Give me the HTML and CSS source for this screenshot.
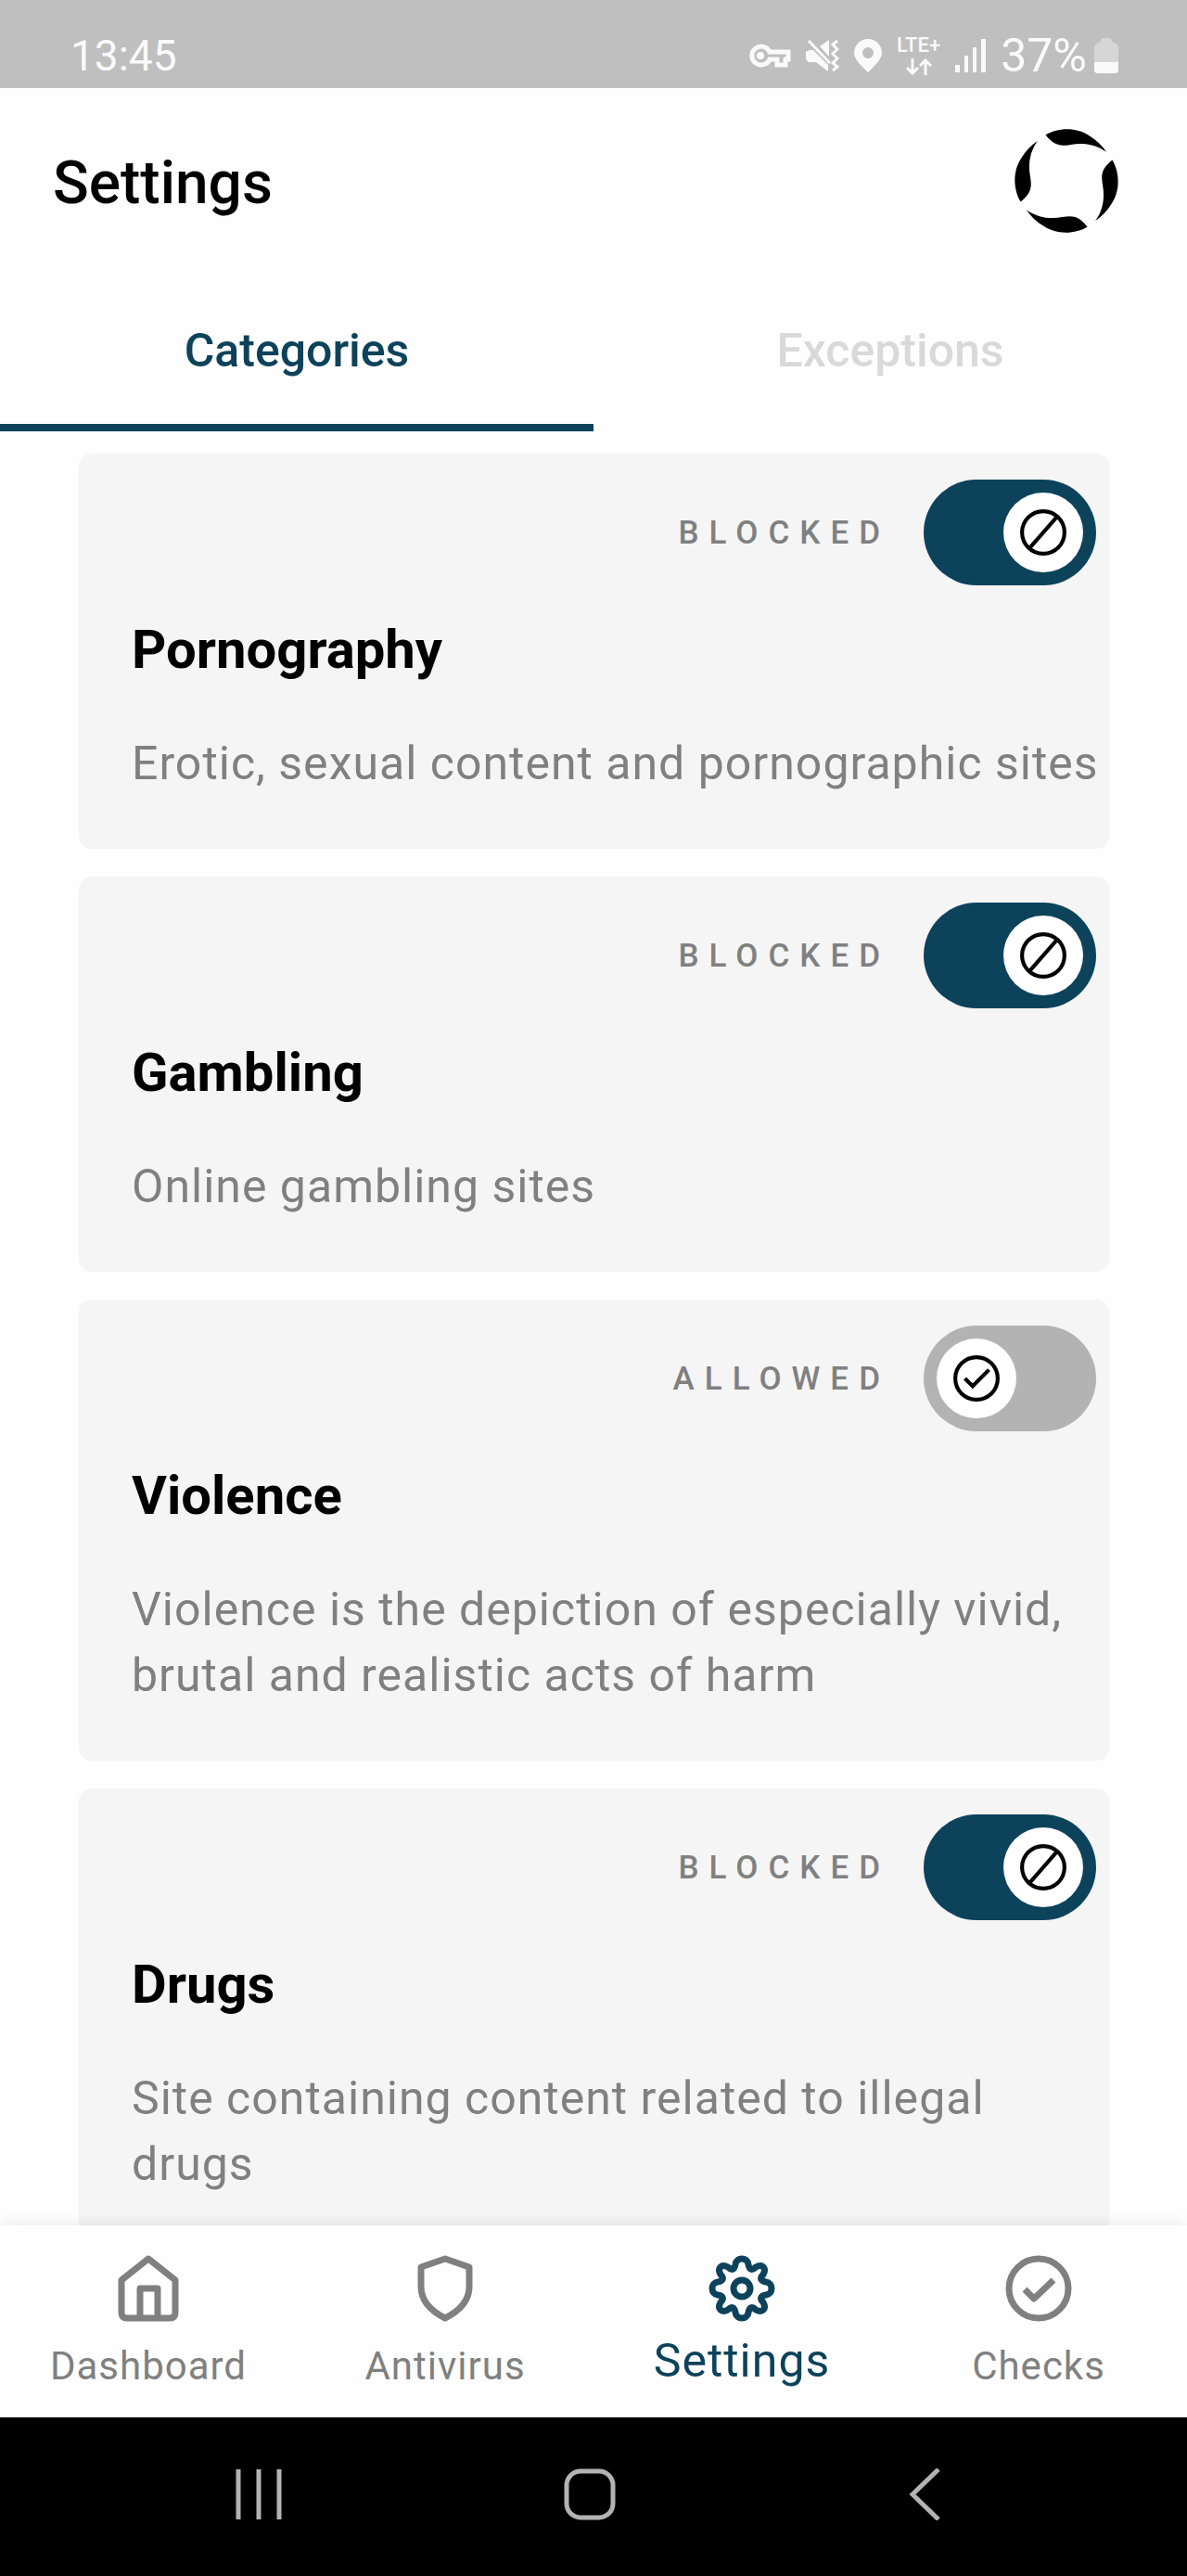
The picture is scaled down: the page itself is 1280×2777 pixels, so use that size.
FILE: index.html
```html
<!DOCTYPE html>
<html lang="en">
<head>
  <meta charset="UTF-8" />
  <meta name="viewport" content="width=device-width, initial-scale=1.0"/>
  <title>Settings</title>
  <link rel="stylesheet" href="styles.css">
</head>
<body>
  <!-- shared icons -->
  <svg class="sprite" aria-hidden="true">
    <symbol id="icon-block" viewBox="0 0 50 50">
      <circle cx="25" cy="25" r="22" />
      <path d="M11 41L39 9" />
    </symbol>
    <symbol id="icon-allow" viewBox="0 0 50 50">
      <circle cx="25" cy="25" r="22" />
      <path d="M13 25l8 8L38 16" />
    </symbol>
  </svg>

  <div class="status-bar">
    <span class="time">13:45</span>
    <div class="status-icons">
      <svg width="46" height="26" viewBox="0 0 46 26" fill="none" stroke="currentColor" stroke-width="5">
        <path d="M23 9H43V17H40V23H31V17H23A10 10 0 1 1 23 9Z" />
        <circle cx="13" cy="13" r="4" fill="currentColor" stroke="none" />
      </svg>
      <svg width="36" height="36" viewBox="0 0 36 36" fill="currentColor">
        <path d="M0 14L4 12H8L24 28V35L11 25H3L0 22ZM15 8L25 1V19Z" />
        <path d="M3 2L26 26M34 2L29 6L34 11L29 16L34 21L29 26L34 30L29 34" fill="none" stroke="currentColor" stroke-width="3" />
      </svg>
      <svg width="30" height="36" viewBox="0 0 30 36" fill="currentColor">
        <path fill-rule="evenodd" d="M15 0A15 15 0 0 0 0 15C0 22 9 30 15 36C21 30 30 22 30 15A15 15 0 0 0 15 0ZM15 9a6 6 0 1 1 0 12a6 6 0 0 1 0-12Z" />
      </svg>
      <div class="lte">
        <span>LTE+</span>
        <svg width="28" height="18" viewBox="0 0 28 18" fill="none" stroke="currentColor" stroke-width="3">
          <path d="M7 0V16M1 10L7 16L13 10M21 18V2M15 8L21 2L27 8" />
        </svg>
      </div>
      <svg width="33" height="36" viewBox="0 0 33 36" fill="currentColor">
        <path d="M0 28h5v8H0zM10 18h4v18h-4zM19 9h4v27h-4zM28 0h5v36h-5z" />
      </svg>
      <div class="battery">
        <span>37%</span>
        <svg width="26" height="38" viewBox="0 0 26 38" fill="currentColor">
          <path opacity=".4" d="M7 4Q7 0 10 0H16Q19 0 19 4Q26 6 26 11V26H0V11Q0 6 7 4Z" />
          <path d="M0 26H26V34Q26 38 22 38H4Q0 38 0 34Z" />
        </svg>
      </div>
    </div>
  </div>

  <header class="header">
    <h1>Settings</h1>
    <svg class="logo" viewBox="0 0 342 344">
      <g id="blade"><path d="M103 23C140 0 200 -5 245 25C270 40 288 58 301 78C265 52 225 47 185 54C150 60 132 58 103 23Z" /></g>
      <use href="#blade" transform="rotate(90 171 172)" />
      <use href="#blade" transform="rotate(180 171 172)" />
      <use href="#blade" transform="rotate(270 171 172)" />
    </svg>
  </header>

  <div class="tabs" role="tablist">
    <button class="tab active" type="button" role="tab" aria-selected="true">Categories</button>
    <button class="tab" type="button" role="tab" aria-selected="false">Exceptions</button>
  </div>

  <main class="categories">
    <section class="card">
      <label class="card-toggle">
        <span class="state">BLOCKED</span>
        <span class="switch">
          <input type="checkbox" role="switch" checked>
          <span class="knob"><svg><use href="#icon-block" /></svg></span>
        </span>
      </label>
      <h2>Pornography</h2>
      <p>Erotic, sexual content and pornographic sites</p>
    </section>

    <section class="card">
      <label class="card-toggle">
        <span class="state">BLOCKED</span>
        <span class="switch">
          <input type="checkbox" role="switch" checked>
          <span class="knob"><svg><use href="#icon-block" /></svg></span>
        </span>
      </label>
      <h2>Gambling</h2>
      <p>Online gambling sites</p>
    </section>

    <section class="card">
      <label class="card-toggle">
        <span class="state">ALLOWED</span>
        <span class="switch">
          <input type="checkbox" role="switch">
          <span class="knob"><svg><use href="#icon-allow" /></svg></span>
        </span>
      </label>
      <h2>Violence</h2>
      <p>Violence is the depiction of especially vivid, brutal and realistic acts of harm</p>
    </section>

    <section class="card">
      <label class="card-toggle">
        <span class="state">BLOCKED</span>
        <span class="switch">
          <input type="checkbox" role="switch" checked>
          <span class="knob"><svg><use href="#icon-block" /></svg></span>
        </span>
      </label>
      <h2>Drugs</h2>
      <p>Site containing content related to illegal drugs</p>
    </section>
  </main>

  <nav class="bottom-nav">
    <a href="#dashboard">
      <svg viewBox="0 0 72 72">
        <path d="M7 27L36 4L65 27V62Q65 68 59 68H13Q7 68 7 62ZM27 68V36H46V68" />
      </svg>
      <span>Dashboard</span>
    </a>
    <a href="#antivirus">
      <svg viewBox="0 0 72 72">
        <path d="M36 4L62 13V34C62 50 50 61 36 68C22 61 10 50 10 34V13Z" />
      </svg>
      <span>Antivirus</span>
    </a>
    <a href="#settings" class="active">
      <svg viewBox="0 0 72 72">
        <circle cx="36" cy="36" r="9" />
        <path d="M29 10C30 2 42 2 43 10C44 16 47 17 51 13C58 9 63 14 59 21C55 25 56 28 62 29C70 30 70 42 62 43C56 44 55 47 59 51C63 58 58 63 51 59C47 55 44 56 43 62C42 70 30 70 29 62C28 56 25 55 21 59C14 63 9 58 13 51C17 47 16 44 10 43C2 42 2 30 10 29C16 28 17 25 13 21C9 14 14 9 21 13C25 17 28 16 29 10Z" />
      </svg>
      <span>Settings</span>
    </a>
    <a href="#checks">
      <svg viewBox="0 0 72 72">
        <circle cx="36" cy="36" r="32" />
        <path d="M21 37L31 47L52 27" />
      </svg>
      <span>Checks</span>
    </a>
  </nav>

  <div class="system-nav">
    <button type="button" aria-label="Recent apps">
      <svg viewBox="0 0 56 56"><path d="M6 1V55M28 1V55M50 1V55" /></svg>
    </button>
    <button type="button" aria-label="Home">
      <svg viewBox="0 0 56 56"><rect x="3" y="3" width="50" height="50" rx="15" /></svg>
    </button>
    <button type="button" aria-label="Back">
      <svg viewBox="0 0 56 56"><path d="M47 1L19 28L47 55" /></svg>
    </button>
  </div>
</body>
</html>
```

FILE: styles.css
```css
* {
  box-sizing: border-box;
}

body {
  margin: 0;
  height: 100vh;
  display: flex;
  flex-direction: column;
  background: #fefefe;
  color: #000;
  font-family: Roboto, sans-serif;
}

h1, h2, p {
  margin: 0;
}

button {
  padding: 0;
  border: none;
  background: none;
  font: inherit;
  cursor: pointer;
}

.sprite {
  display: none;
}

/* status bar */
.status-bar {
  flex: none;
  height: 95px;
  padding: 24px 74px 0 76px;
  display: flex;
  align-items: center;
  justify-content: space-between;
  background: #bfbfbf;
  color: #fafafa;
}

.time {
  font-size: 46px;
  line-height: 56px;
}

.status-icons {
  display: flex;
  align-items: center;
  gap: 16px;
}

.status-icons svg {
  display: block;
}

.lte {
  display: flex;
  flex-direction: column;
  align-items: center;
  gap: 4px;
  font-size: 22px;
  font-weight: 500;
  line-height: 20px;
}

.battery {
  display: flex;
  align-items: center;
  gap: 8px;
  font-size: 50px;
  line-height: 56px;
}

/* header */
.header {
  flex: none;
  height: 199px;
  padding: 0 73px 0 57px;
  display: flex;
  align-items: center;
  justify-content: space-between;
}

h1 {
  padding-top: 6px;
  font-size: 64px;
  font-weight: 500;
  line-height: 84px;
}

.logo {
  width: 114px;
  height: 114px;
}

.tabs {
  flex: none;
  display: flex;
}

.tab {
  flex: 1;
  height: 171px;
  padding-top: 4px;
  border-bottom: 8px solid transparent;
  color: #d9d9d9;
  font-size: 50px;
  font-weight: 500;
}

.tab.active {
  border-color: #0d425b;
  color: #0d425b;
}

/* category list */
.categories {
  flex: 1;
  min-height: 0;
  padding: 24px 84px 24px 85px;
  display: flex;
  flex-direction: column;
  gap: 30px;
  overflow-y: auto;
  scrollbar-width: none;
}

.card {
  flex: none;
  padding: 28px 6px 56px 57px;
  border-radius: 14px;
  background: #f5f5f5;
}

.card-toggle {
  padding-right: 8px;
  display: flex;
  align-items: center;
  justify-content: flex-end;
  gap: 36px;
}

.state {
  color: #808080;
  font-size: 35px;
  font-weight: 500;
  letter-spacing: 11px;
}

.switch {
  display: grid;
  width: 186px;
  height: 114px;
}

.switch input,
.knob {
  grid-area: 1 / 1;
}

.switch input {
  appearance: none;
  width: 100%;
  height: 100%;
  margin: 0;
  border-radius: 57px;
  background: #b3b3b3;
}

.switch input:checked {
  background: #0d425b;
}

.knob {
  width: 86px;
  height: 86px;
  margin: 14px;
  display: flex;
  align-items: center;
  justify-content: center;
  border-radius: 50%;
  background: #fff;
  z-index: 1;
  pointer-events: none;
}

.switch input:checked + .knob {
  justify-self: end;
}

.knob svg {
  width: 52px;
  height: 52px;
  fill: none;
  stroke: #000;
  stroke-width: 4;
}

.card h2 {
  margin-top: 27px;
  font-size: 58px;
  font-weight: 700;
  line-height: 85px;
}

.card p {
  margin-top: 45px;
  color: #808080;
  font-size: 50px;
  line-height: 71px;
  letter-spacing: 1px;
}

/* app navigation */
.bottom-nav {
  flex: none;
  height: 207px;
  padding-bottom: 23px;
  display: grid;
  grid-template-columns: repeat(4, 1fr);
  background: #fefefe;
  box-shadow: 0 0 16px rgba(0, 0, 0, 0.1);
  z-index: 1;
}

.bottom-nav a {
  padding-top: 32px;
  display: flex;
  flex-direction: column;
  align-items: center;
  justify-content: space-between;
  color: #808080;
  font-size: 42px;
  line-height: 64px;
  letter-spacing: 1px;
  text-decoration: none;
}

.bottom-nav a.active {
  color: #0d425b;
  font-size: 50px;
  line-height: 75px;
}

.bottom-nav svg {
  flex: none;
  width: 72px;
  height: 72px;
  fill: none;
  stroke: currentColor;
  stroke-width: 7;
  stroke-linejoin: round;
}

/* system buttons */
.system-nav {
  flex: none;
  height: 171px;
  padding: 0 108px 6px 100px;
  display: grid;
  grid-template-columns: repeat(3, 1fr);
  background: #000;
}

.system-nav button {
  display: flex;
  align-items: center;
  justify-content: center;
}

.system-nav svg {
  width: 56px;
  height: 56px;
  fill: none;
  stroke: #b3b3b3;
  stroke-width: 5;
}
```
